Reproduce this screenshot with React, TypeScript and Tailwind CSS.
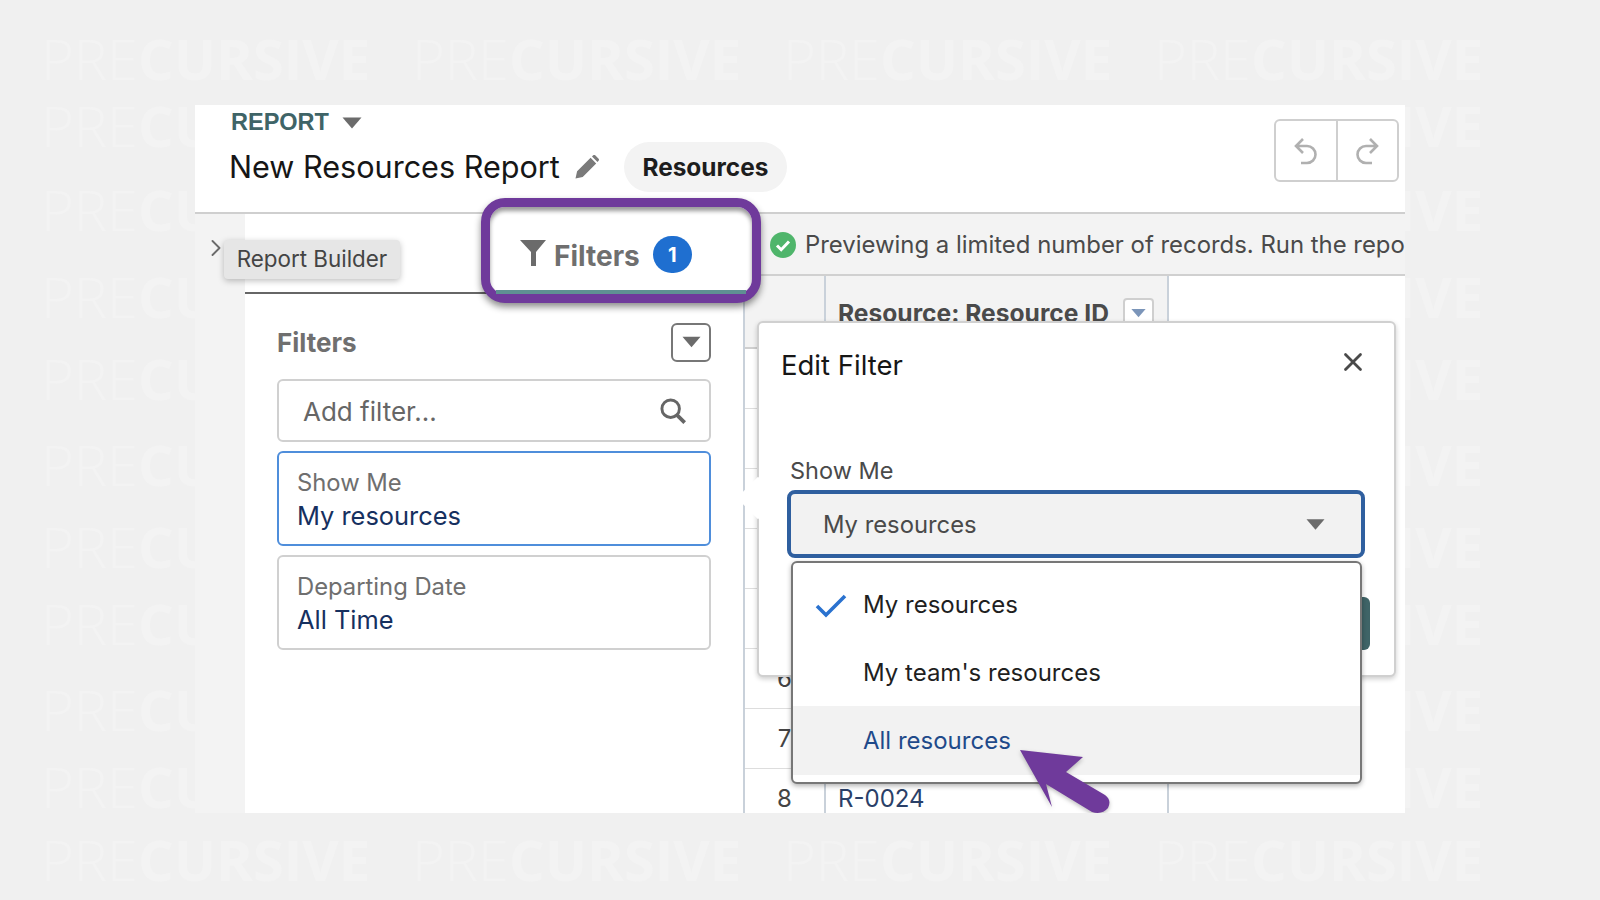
import { ChevronRight, X } from "lucide-react";

const watermarkRows = [58, 125, 209, 296, 378, 464, 546, 623, 709, 786, 859];
// only the last rows of the table show from behind the popover
const tableRows = [
  { n: "", id: "" },
  { n: "", id: "" },
  { n: "", id: "" },
  { n: "", id: "" },
  { n: "", id: "" },
  { n: "6", id: "" },
  { n: "7", id: "" },
  { n: "8", id: "R-0024" },
];

function Triangle({ className }: { className: string }) {
  return (
    <svg viewBox="0 0 20 12" className={className} fill="currentColor">
      <path d="M0.5 0.5h19L10 11.5z" />
    </svg>
  );
}

function HookArrow({ className }: { className?: string }) {
  return (
    <svg viewBox="0 0 26 28" className={`h-[28px] w-[26px] ${className ?? ""}`} fill="none" stroke="currentColor" strokeWidth="2.6">
      <path d="M10 2L3 9l7 7M3 9h11a8 8 0 0 1 0 17H8" />
    </svg>
  );
}

function FilterCard({ label, value, active }: { label: string; value: string; active?: boolean }) {
  return (
    <div
      className={`mt-[9px] flex h-[95px] flex-col justify-center rounded-md border-2 bg-white px-[18px] ${
        active ? "border-[#4f8edb]" : "border-[#d0d0d0]"
      }`}
    >
      <div className="text-[23.800px] leading-[33px] text-[#6f6f6f]">{label}</div>
      <div className="text-[25.400px] leading-[33px] text-[#16305f]">{value}</div>
    </div>
  );
}

export default function App() {
  return (
    <main className="relative h-[900px] w-[1600px] overflow-hidden bg-[#f0f0f0] font-['Inter',sans-serif]">
      {/* watermark */}
      <div className="absolute inset-0 font-['Open_Sans',sans-serif] text-[56px] leading-[52px] text-[#f3f3f3]">
        {watermarkRows.map((y) => (
          <div key={y} className="absolute left-[41px] flex gap-[44px]" style={{ top: y - 26 }}>
            {[0, 1, 2, 3].map((i) => (
              <div key={i} className="w-[327px] whitespace-nowrap">
                <span className="font-light">PRE</span>
                <span className="font-bold">CURSIVE</span>
              </div>
            ))}
          </div>
        ))}
      </div>

      <div className="relative pl-[195px] pt-[105px]">
        <div className="relative h-[708px] w-[1210px] overflow-hidden bg-white">
          {/* header */}
          <header className="flex h-[109px] items-start justify-between border-b-2 border-[#cfcfcf] pl-[34px] pr-[6px]">
            <div>
              <div className="flex h-[36px] items-center gap-[13px] pl-[2px]">
                <span className="font-['Liberation_Sans',sans-serif] text-[23.500px] font-bold text-[#3f6467]">REPORT</span>
                <Triangle className="h-[12px] w-[20px] text-[#6b6b6b]" />
              </div>
              <div className="mt-[1px] flex items-center">
                <h1 className="text-[30.600px] leading-[50px] text-[#161616]">New Resources Report</h1>
                <svg viewBox="0 0 24 24" className="ml-[15px] h-[24px] w-[24px] text-[#7a7a7a]" fill="currentColor">
                  <path d="M0.5 23.5l1.6-7.2L15.6 2.8l5.6 5.6L7.7 21.9zM17 1.4l1.2-1.1a1.5 1.5 0 0 1 2 0l3.4 3.4a1.5 1.5 0 0 1 0 2L22.500 7z" />
                </svg>
                <span className="ml-[25px] flex h-[50px] w-[163px] items-center justify-center rounded-full bg-[#f3f3f3] text-[24.400px] font-bold text-[#1d1d1d]">
                  Resources
                </span>
              </div>
            </div>
            <div className="mt-[14px] flex h-[63px] w-[125px] rounded-md border-2 border-[#cfcfcf] text-[#b0b0b0]">
              <div className="flex flex-1 items-center justify-center border-r-2 border-[#cfcfcf]">
                <HookArrow />
              </div>
              <div className="flex flex-1 items-center justify-center">
                <HookArrow className="-scale-x-100" />
              </div>
            </div>
          </header>

          <div className="flex h-[599px]">
            {/* collapsed rail */}
            <div className="w-[50px] bg-[#f3f3f3] pl-[7px] pt-[20px] text-[#6b6b6b]">
              <ChevronRight size={28} strokeWidth={1.6} />
            </div>

            {/* filters panel */}
            <aside className="w-[500px] border-r-2 border-[#c9d1da] bg-white">
              <div className="h-[80px] border-b-2 border-[#666666]" />
              <div className="w-[466px] pl-[32px]">
                <div className="mt-[33px] flex h-[30px] items-center justify-between">
                  <h2 className="text-[26px] font-bold text-[#6f6f6f]">Filters</h2>
                  <button className="flex h-[39px] w-[40px] items-center justify-center rounded-md border-2 border-[#777777]">
                    <Triangle className="h-[12px] w-[19px] text-[#6b6b6b]" />
                  </button>
                </div>
                <div className="mt-[22px] flex h-[63px] items-center justify-between rounded-md border-2 border-[#d0d0d0] pl-[24px] pr-[22px] text-[26px] text-[#666666]">
                  <span className="pt-[1px]">Add filter...</span>
                  <svg viewBox="0 0 24 24" className="h-[28px] w-[28px] text-[#666666]" fill="none" stroke="currentColor">
                    <circle cx="10" cy="10" r="7.500" strokeWidth="2.500" />
                    <path d="M15.500 15.500L22 22" strokeWidth="3.200" />
                  </svg>
                </div>
                <FilterCard label="Show Me" value="My resources" active />
                <FilterCard label="Departing Date" value="All Time" />
              </div>
            </aside>

            {/* results */}
            <section className="min-w-0 flex-1">
              <div className="flex h-[62px] items-center overflow-hidden whitespace-nowrap border-b-2 border-[#d0d0d0] bg-[#f3f3f3] pl-[25px] pt-[2px] text-[23.900px] text-[#4a4a4a]">
                <svg viewBox="0 0 26 26" className="mr-[9px] h-[26px] w-[26px] shrink-0">
                  <circle cx="13" cy="13" r="13" fill="#4fb56b" />
                  <path d="M7 13.500l4.200 4.200L19 9.500" fill="none" stroke="#ffffff" strokeWidth="3" />
                </svg>
                Previewing a limited number of records. Run the repo
              </div>
              <div className="flex h-[73px] text-[24.600px]">
                <div className="w-[79px] border-b-2 border-[#cfcfcf] bg-[#f3f3f3]" />
                <div className="flex w-[345px] items-start gap-[14px] border-x-2 border-x-[#c9d1da] bg-[#f3f3f3] pl-[12px] pt-[20px] font-bold text-[#4a4a4a]">
                  <span className="whitespace-nowrap leading-[34px]">Resource: Resource ID</span>
                  <div className="mt-[2px] flex h-[30px] w-[31px] shrink-0 items-center justify-center rounded-t border-2 border-[#cfcfcf] bg-white">
                    <Triangle className="h-[10px] w-[15px] text-[#7b95b9]" />
                  </div>
                </div>
              </div>
              {tableRows.map((row, i) => (
                <div key={i} className="flex h-[60px] text-[24px] leading-[60px]">
                  <div className="w-[79px] border-b border-[#dddddd] text-center text-[#444444]">{row.n}</div>
                  <div className="w-[345px] border-x-2 border-b border-x-[#c9d1da] border-b-[#dddddd] pl-[12px] text-[#2a4068]">
                    {row.id}
                  </div>
                </div>
              ))}
            </section>
          </div>

          {/* report builder tooltip */}
          <div className="absolute left-[29px] top-[135px] flex h-[39px] w-[176px] items-center justify-center rounded-sm bg-[#e6e6e6] pb-[1px] text-[22.400px] text-[#444444] shadow-[0_2px_6px_rgba(0,0,0,0.25)]">
            Report Builder
          </div>

          {/* highlighted tab */}
          <div className="absolute left-[286px] top-[93px] flex h-[105px] w-[280px] items-start rounded-[24px] border-[9px] border-[#6f3a9b] bg-white pl-[30px] pt-[33px] shadow-[0_4px_7px_rgba(0,0,0,0.45),inset_0_4px_4px_rgba(0,0,0,0.4)]">
            <svg viewBox="0 0 26 26" className="h-[26px] w-[26px] text-[#6b6b6b]" fill="currentColor">
              <path d="M0 0h26L16 12v14h-5V12z" />
            </svg>
            <span className="ml-[8px] text-[28px] font-bold leading-[32px] text-[#6f6f6f]">Filters</span>
            <span className="ml-[13px] -mt-[4px] flex h-[37px] w-[39px] items-center justify-center rounded-full bg-[#1f6fd0] text-[20px] font-bold text-white">
              1
            </span>
            <div className="absolute bottom-0 left-[6px] right-[6px] h-[4px] bg-[#5f9093]" />
          </div>

          {/* edit filter popover */}
          <div className="absolute left-[562px] top-[216px] flex h-[356px] w-[639px] flex-col rounded-md border-2 border-[#d0d0d0] bg-white shadow-[0_2px_5px_rgba(0,0,0,0.2)]">
            <div className="absolute -left-[16px] top-[160px] h-[30px] w-[30px] rotate-45 bg-white" />
            <div className="flex items-start justify-between pl-[22px] pr-[26px] pt-[24px]">
              <h3 className="relative text-[27.500px] leading-[36px] text-[#161616]">Edit Filter</h3>
              <X size={30} strokeWidth={2.2} className="text-[#4a4a4a]" />
            </div>
            <label className="relative mt-[72px] pl-[31px] text-[23.500px] leading-[32px] text-[#4a4a4a]">Show Me</label>
            <div className="relative ml-[28px] mt-[3px] flex h-[68px] w-[578px] shrink-0 items-center justify-between rounded-lg border-[4px] border-[#2f5f9f] bg-[#f2f2f2] pl-[32px] pr-[36px] text-[23.800px] text-[#4a4a4a]">
              <span className="pt-[1px]">My resources</span>
              <Triangle className="h-[13px] w-[19px] text-[#6b6b6b]" />
            </div>
            <div className="mt-[39px] flex justify-end pr-[24px]">
              <button className="h-[53px] w-[130px] rounded-md bg-[#3f6467]" />
            </div>
          </div>

          {/* dropdown options */}
          <ul className="absolute left-[596px] top-[456px] flex h-[223px] w-[571px] flex-col overflow-hidden rounded-md border-2 border-[#777777] bg-white pt-[8px] text-[24px] shadow-[0_2px_5px_rgba(0,0,0,0.3)]">
            <li className="relative flex h-[68px] shrink-0 items-center pl-[70px] text-[#1f1f1f]">
              <svg viewBox="0 0 32 24" className="absolute left-[22px] top-[23px] h-[24px] w-[32px] text-[#2a72cf]" fill="none" stroke="currentColor" strokeWidth="3.600">
                <path d="M2 12l9 9L30 2" />
              </svg>
              My resources
            </li>
            <li className="flex h-[67px] shrink-0 items-center pl-[70px] text-[#1f1f1f]">My team's resources</li>
            <li className="flex h-[69px] shrink-0 items-center bg-[#f2f2f2] pl-[70px] text-[#1f4a8a]">All resources</li>
          </ul>

          {/* pointer arrow */}
          <svg viewBox="0 0 100 70" className="absolute left-[825px] top-[645px] h-[70px] w-[100px] drop-shadow-[0_2px_2px_rgba(0,0,0,0.25)]" fill="#6f3a9b">
            <path d="M0 0L63 7L46 22L85 45Q92 50 88 58Q82 65 72 62L26 34L32 57z" />
          </svg>
        </div>
      </div>
    </main>
  );
}
